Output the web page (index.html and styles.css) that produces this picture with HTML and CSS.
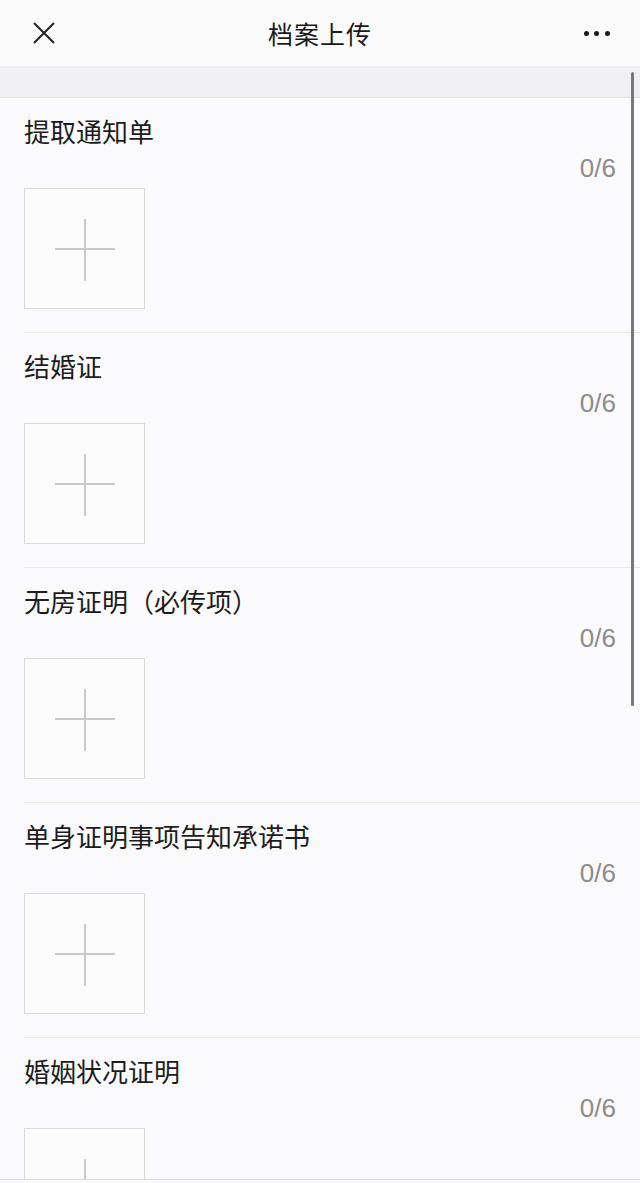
FILE: index.html
```html
<!DOCTYPE html>
<html lang="zh-CN">
<head>
  <meta charset="UTF-8">
  <meta name="viewport" content="width=device-width, initial-scale=1.0">
  <title>档案上传</title>
  <link rel="stylesheet" href="styles.css">
</head>
<body>
  <!-- Top navigation -->
  <header class="navbar">
    <span class="nav-close">
      <svg width="24" height="24" viewBox="0 0 24 24">
        <path d="M2 2 L22 22 M22 2 L2 22" stroke="#222" stroke-width="2" fill="none"/>
      </svg>
    </span>
    <h1 class="nav-title">档案上传</h1>
    <span class="nav-more">
      <i></i><i></i><i></i>
    </span>
  </header>

  <div class="band"></div>

  <main class="list">
    <section class="item">
      <div class="item-inner">
        <h2 class="item-title">提取通知单</h2>
        <div class="item-count">0/6</div>
        <div class="upload-box"><span class="plus"></span></div>
      </div>
    </section>
    <section class="item">
      <div class="item-inner">
        <h2 class="item-title">结婚证</h2>
        <div class="item-count">0/6</div>
        <div class="upload-box"><span class="plus"></span></div>
      </div>
    </section>
    <section class="item">
      <div class="item-inner">
        <h2 class="item-title">无房证明（必传项）</h2>
        <div class="item-count">0/6</div>
        <div class="upload-box"><span class="plus"></span></div>
      </div>
    </section>
    <section class="item">
      <div class="item-inner">
        <h2 class="item-title">单身证明事项告知承诺书</h2>
        <div class="item-count">0/6</div>
        <div class="upload-box"><span class="plus"></span></div>
      </div>
    </section>
    <section class="item">
      <div class="item-inner">
        <h2 class="item-title">婚姻状况证明</h2>
        <div class="item-count">0/6</div>
        <div class="upload-box"><span class="plus"></span></div>
      </div>
    </section>
  </main>

  <!-- Scroll indicator -->
  <div class="scrollbar"></div>
  <div class="bottom-edge"></div>
</body>
</html>
```

FILE: styles.css
```css
/* General Styles */
html, body {
  height: 100%;
}

body {
  margin: 0;
  padding: 0;
  background-color: #fafafc;
  color: #1c1c1c;
  font-family: "Noto Sans CJK SC", "Noto Sans", sans-serif;
  overflow: hidden;
}

/* Navigation */
.navbar {
  height: 66px;
  display: flex;
  align-items: center;
  justify-content: space-between;
  padding: 0 30px 0 32px;
  background-color: #fafafa;
  box-sizing: border-box;
}

.nav-close {
  width: 24px;
  height: 24px;
  display: flex;
}

.nav-title {
  margin: 0;
  font-size: 25px;
  font-weight: 400;
  color: #1a1a1a;
  letter-spacing: 1px;
}

.nav-more {
  width: 26px;
  display: flex;
  justify-content: space-between;
}

.nav-more i {
  width: 5px;
  height: 5px;
  border-radius: 50%;
  background-color: #1a1a1a;
}

.band {
  height: 31px;
  background-color: #f0f0f2;
  border-bottom: 1px solid #e2e2e4;
}

/* Upload list */
.item {
  padding-left: 24px;
}

.item-inner {
  padding: 15px 24px 23px 0;
  border-bottom: 1px solid #e8e8ea;
}

.item-title {
  margin: 0;
  font-size: 26px;
  font-weight: 400;
  line-height: 36px;
  color: #1c1c1c;
}

.item-count {
  margin-top: 1px;
  font-family: "Liberation Sans", "Noto Sans", sans-serif;
  font-size: 26px;
  line-height: 36px;
  color: #8c8c8c;
  text-align: right;
}

.upload-box {
  margin-top: 2px;
  width: 121px;
  height: 121px;
  box-sizing: border-box;
  border: 1px solid #d9d9db;
  background-color: #fcfcfd;
  display: flex;
  align-items: center;
  justify-content: center;
}

.plus {
  position: relative;
  width: 60px;
  height: 60px;
}

.plus::before,
.plus::after {
  content: "";
  position: absolute;
  background-color: #c9c9cb;
}

.plus::before {
  left: 0;
  top: 29px;
  width: 60px;
  height: 2px;
}

.plus::after {
  top: 0;
  left: 29px;
  width: 2px;
  height: 62px;
}

/* Overlays */
.scrollbar {
  position: fixed;
  top: 72px;
  right: 6px;
  width: 3px;
  height: 634px;
  border-radius: 2px;
  background-color: #787878;
}

.bottom-edge {
  position: fixed;
  left: 0;
  right: 0;
  bottom: 0;
  height: 3px;
  background-color: #fafafc;
  border-top: 1px solid #dcdcde;
}
```
